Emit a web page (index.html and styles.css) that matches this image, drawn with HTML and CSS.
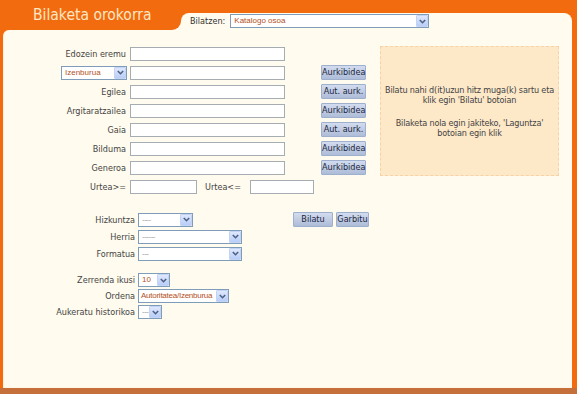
FILE: index.html
```html
<!DOCTYPE html>
<html>
<head>
<meta charset="utf-8">
<link rel="stylesheet" href="styles.css">
</head>
<body>
<div class="page">
  <div class="head">
    <div class="title">Bilaketa orokorra</div>
    <div class="tab">
      <span class="tablbl">Bilatzen:</span>
      <div class="sel w199"><span class="v">Katalogo osoa</span><span class="arr"><svg width="7" height="5" viewBox="0 0 7 5"><polyline points="0.8,1 3.5,3.7 6.2,1" fill="none" stroke="#4d6185" stroke-width="1.6"/></svg></span></div>
    </div>
  </div>
  <div class="panel">
    <div class="form">
      <div class="info">
        <p>Bilatu nahi d(it)uzun hitz muga(k) sartu eta klik egin 'Bilatu' botoian</p>
        <p>Bilaketa nola egin jakiteko, 'Laguntza' botoian egin klik</p>
      </div>

      <label class="c1">Edozein eremu</label>
      <input class="c2 txt" type="text">

      <div class="c1 selcell"><div class="sel w66"><span class="v">Izenburua</span><span class="arr"><svg width="7" height="5" viewBox="0 0 7 5"><polyline points="0.8,1 3.5,3.7 6.2,1" fill="none" stroke="#4d6185" stroke-width="1.6"/></svg></span></div></div>
      <input class="c2 txt" type="text">
      <button class="c4 btn">Aurkibidea</button>

      <label class="c1">Egilea</label>
      <input class="c2 txt" type="text">
      <button class="c4 btn">Aut. aurk.</button>

      <label class="c1">Argitaratzailea</label>
      <input class="c2 txt" type="text">
      <button class="c4 btn">Aurkibidea</button>

      <label class="c1">Gaia</label>
      <input class="c2 txt" type="text">
      <button class="c4 btn">Aut. aurk.</button>

      <label class="c1">Bilduma</label>
      <input class="c2 txt" type="text">
      <button class="c4 btn">Aurkibidea</button>

      <label class="c1">Generoa</label>
      <input class="c2 txt" type="text">
      <button class="c4 btn">Aurkibidea</button>

      <label class="c1">Urtea&gt;=</label>
      <div class="c2 urtea">
        <input class="txt w67" type="text">
        <span class="ulbl">Urtea&lt;=</span>
        <input class="txt w64" type="text">
      </div>
    </div>

    <div class="lower">
      <div class="lrow">
        <label class="llbl">Hizkuntza</label>
        <div class="sel w55"><span class="v dash">----</span><span class="arr"><svg width="7" height="5" viewBox="0 0 7 5"><polyline points="0.8,1 3.5,3.7 6.2,1" fill="none" stroke="#4d6185" stroke-width="1.6"/></svg></span></div>
        <div class="actions">
          <button class="btn b-bilatu">Bilatu</button>
          <button class="btn b-garbitu">Garbitu</button>
        </div>
      </div>
      <div class="lrow">
        <label class="llbl">Herria</label>
        <div class="sel w104"><span class="v dash">------</span><span class="arr"><svg width="7" height="5" viewBox="0 0 7 5"><polyline points="0.8,1 3.5,3.7 6.2,1" fill="none" stroke="#4d6185" stroke-width="1.6"/></svg></span></div>
      </div>
      <div class="lrow">
        <label class="llbl">Formatua</label>
        <div class="sel w104"><span class="v dash">---</span><span class="arr"><svg width="7" height="5" viewBox="0 0 7 5"><polyline points="0.8,1 3.5,3.7 6.2,1" fill="none" stroke="#4d6185" stroke-width="1.6"/></svg></span></div>
      </div>
    </div>

    <div class="lower2">
      <div class="lrow2">
        <label class="llbl">Zerrenda ikusi</label>
        <div class="sel w32"><span class="v">10</span><span class="arr"><svg width="7" height="5" viewBox="0 0 7 5"><polyline points="0.8,1 3.5,3.7 6.2,1" fill="none" stroke="#4d6185" stroke-width="1.6"/></svg></span></div>
      </div>
      <div class="lrow2">
        <label class="llbl">Ordena</label>
        <div class="sel w91"><span class="v tight">Autoritatea/Izenburua</span><span class="arr"><svg width="7" height="5" viewBox="0 0 7 5"><polyline points="0.8,1 3.5,3.7 6.2,1" fill="none" stroke="#4d6185" stroke-width="1.6"/></svg></span></div>
      </div>
      <div class="lrow2">
        <label class="llbl">Aukeratu historikoa</label>
        <div class="sel w24"><span class="v dash">---</span><span class="arr"><svg width="7" height="5" viewBox="0 0 7 5"><polyline points="0.8,1 3.5,3.7 6.2,1" fill="none" stroke="#4d6185" stroke-width="1.6"/></svg></span></div>
      </div>
    </div>
  </div>
</div>
</body>
</html>
```

FILE: styles.css
```css
* { box-sizing: border-box; }
html, body { margin: 0; padding: 0; }
body {
  width: 577px;
  height: 394px;
  overflow: hidden;
  font-family: "DejaVu Sans Condensed", "DejaVu Sans", sans-serif;
  font-size: 9px;
  color: #444;
}
.page {
  width: 577px;
  height: 394px;
  background: #f26b0f;
  border-bottom: 6px solid #c5703a;
  display: flex;
  flex-direction: column;
}
.head {
  display: flex;
  height: 30px;
  flex: none;
  background-color: #f26b0f;
  background-image: linear-gradient(#fffbee, #fffbee);
  background-repeat: no-repeat;
  background-size: 190px 9px;
  background-position: left bottom;
}
.title {
  width: 181px;
  height: 30px;
  background: #f26b0f;
  border-bottom-right-radius: 9px;
  color: #fde7c4;
  font-size: 15.5px;
  line-height: 30px;
  padding-left: 33px;
  white-space: nowrap;
}
.tab {
  flex: 1;
  margin-top: 13px;
  margin-right: 5px;
  background: #fffbee;
  border-radius: 8px 8px 0 0;
  display: flex;
  align-items: flex-start;
  padding-left: 9px;
  padding-top: 1px;
}
.tablbl {
  line-height: 14px;
  margin-right: 5px;
  color: #333;
}
.panel {
  flex: 1;
  margin: 0 5px 0 3px;
  background: #fffbee;
  border-top-left-radius: 6px;
  border-left: 1px solid #fff3dc;
  border-bottom: 1px solid #fff6e6;
}
.form {
  display: grid;
  grid-template-columns: 126px 155px 36px 45px 14px 179px;
  grid-auto-rows: 19px;
  align-items: center;
  margin-top: 14px;
}
.c1 { grid-column: 1; }
.c2 { grid-column: 2; }
.c4 { grid-column: 4; }
label.c1 {
  text-align: right;
  padding-right: 4px;
  white-space: nowrap;
  color: #444;
}
.selcell { display: flex; justify-content: flex-end; padding-right: 3px; }
.urtea { grid-column: 2 / span 3; display: flex; align-items: center; }
.ulbl { width: 53px; padding-left: 8px; }
.txt {
  height: 14px;
  border: 1px solid #a5acb2;
  background: #fff;
  padding: 0;
  margin: 0;
  font-size: 10px;
  width: 155px;
}
.w67 { width: 67px; }
.w64 { width: 64px; }
.info {
  grid-column: 6;
  grid-row: 1 / span 7;
  align-self: stretch;
  margin: 2px 0 1px;
  background: #fde8c8;
  border: 1px dashed #f6d2a6;
  display: flex;
  flex-direction: column;
  justify-content: center;
  text-align: center;
  color: #444;
  line-height: 10px;
  padding: 0;
  letter-spacing: -0.15px;
}
.info p { margin: 0 0 13px; }
.info p:last-child { margin-bottom: 0; }
.btn {
  height: 15px;
  padding: 0;
  border: 1px solid #9fb0cf;
  background: linear-gradient(#d3dcef, #aebcd8);
  color: #1c2740;
  font-family: "DejaVu Sans Condensed", "DejaVu Sans", sans-serif;
  font-size: 9px;
  line-height: 13px;
  white-space: nowrap;
  width: 45px;
  border-radius: 1px;
}
.sel {
  display: flex;
  align-items: center;
  height: 14px;
  border: 1px solid #7f9db9;
  background: #fff;
  overflow: hidden;
}
.sel .v {
  flex: 1;
  min-width: 0;
  padding-left: 3px;
  font-family: "Liberation Sans", Arial, sans-serif;
  font-size: 8px;
  color: #b4501c;
  white-space: nowrap;
  overflow: hidden;
  line-height: 12px;
}
.sel .v.tight { padding-left: 2px; letter-spacing: -0.25px; }
.sel .v.dash { color: #999; letter-spacing: -0.5px; }
.sel .arr {
  flex: none;
  width: 12px;
  height: 12px;
  background: linear-gradient(#dfe8fd, #b9cdf7);
  border: 1px solid #c3d3f6;
  border-radius: 1px;
  display: flex;
  align-items: center;
  justify-content: center;
}
.w199 { width: 199px; }
.w66 { width: 66px; }
.w55 { width: 55px; }
.w104 { width: 104px; }
.w32 { width: 32px; }
.w91 { width: 91px; }
.w24 { width: 24px; }
.lower { margin-top: 15px; }
.lrow, .lrow2 {
  display: flex;
  align-items: center;
  height: 17px;
}
.lrow2 { height: 16px; }
.lower2 { margin-top: 10px; }
.llbl {
  width: 134px;
  text-align: right;
  padding-right: 3px;
  white-space: nowrap;
  color: #444;
}
.actions { display: flex; margin-left: 100px; gap: 3px; }
.b-bilatu { width: 40px; }
.b-garbitu { width: 33px; }
```
